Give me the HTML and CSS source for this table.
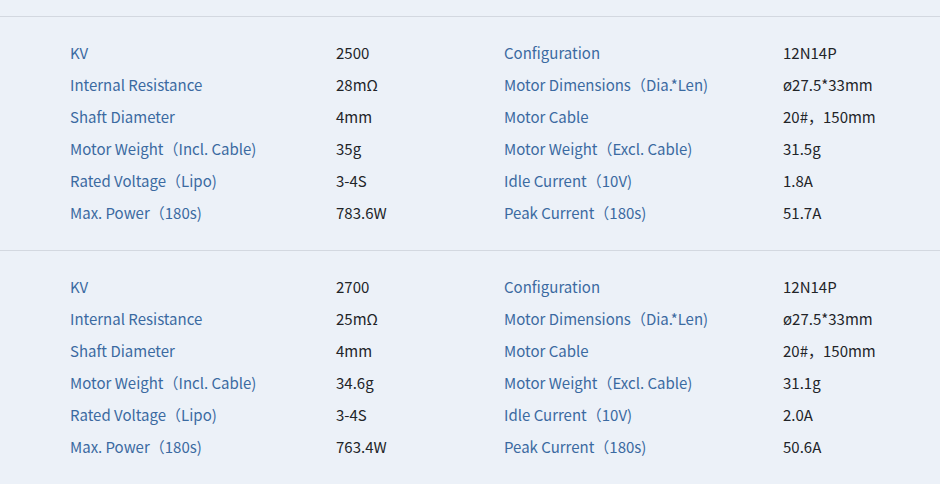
FILE: index.html
```html
<!DOCTYPE html>
<html>
<head>
<meta charset="utf-8">
<link rel="stylesheet" href="styles.css">
</head>
<body>
<div class="page">
  <section class="specs">
    <div class="l">KV</div><div class="v">2500</div><div class="l">Configuration</div><div class="v">12N14P</div>
    <div class="l">Internal Resistance</div><div class="v">28mΩ</div><div class="l">Motor Dimensions（Dia.*Len)</div><div class="v">ø27.5*33mm</div>
    <div class="l">Shaft Diameter</div><div class="v">4mm</div><div class="l">Motor Cable</div><div class="v">20#，150mm</div>
    <div class="l">Motor Weight（Incl. Cable)</div><div class="v">35g</div><div class="l">Motor Weight（Excl. Cable)</div><div class="v">31.5g</div>
    <div class="l">Rated Voltage（Lipo)</div><div class="v">3-4S</div><div class="l">Idle Current（10V)</div><div class="v">1.8A</div>
    <div class="l">Max. Power（180s)</div><div class="v">783.6W</div><div class="l">Peak Current（180s)</div><div class="v">51.7A</div>
  </section>
  <section class="specs">
    <div class="l">KV</div><div class="v">2700</div><div class="l">Configuration</div><div class="v">12N14P</div>
    <div class="l">Internal Resistance</div><div class="v">25mΩ</div><div class="l">Motor Dimensions（Dia.*Len)</div><div class="v">ø27.5*33mm</div>
    <div class="l">Shaft Diameter</div><div class="v">4mm</div><div class="l">Motor Cable</div><div class="v">20#，150mm</div>
    <div class="l">Motor Weight（Incl. Cable)</div><div class="v">34.6g</div><div class="l">Motor Weight（Excl. Cable)</div><div class="v">31.1g</div>
    <div class="l">Rated Voltage（Lipo)</div><div class="v">3-4S</div><div class="l">Idle Current（10V)</div><div class="v">2.0A</div>
    <div class="l">Max. Power（180s)</div><div class="v">763.4W</div><div class="l">Peak Current（180s)</div><div class="v">50.6A</div>
  </section>
</div>
</body>
</html>
```
FILE: styles.css
```css
html, body {
  margin: 0;
  padding: 0;
  background: #ecf1f8;
}
body {
  font-family: "Noto Sans CJK JP", "Noto Sans", sans-serif;
  font-size: 15px;
}
.page {
  padding-top: 16px;
}
.specs {
  display: grid;
  grid-template-columns: 266px 168px 279px 1fr;
  grid-auto-rows: 32px;
  align-items: center;
  padding: 19px 0 22px 70px;
  border-top: 1px solid #d3d8e0;
}
.l {
  color: #3b6aa1;
}
.v {
  color: #222428;
}
```
